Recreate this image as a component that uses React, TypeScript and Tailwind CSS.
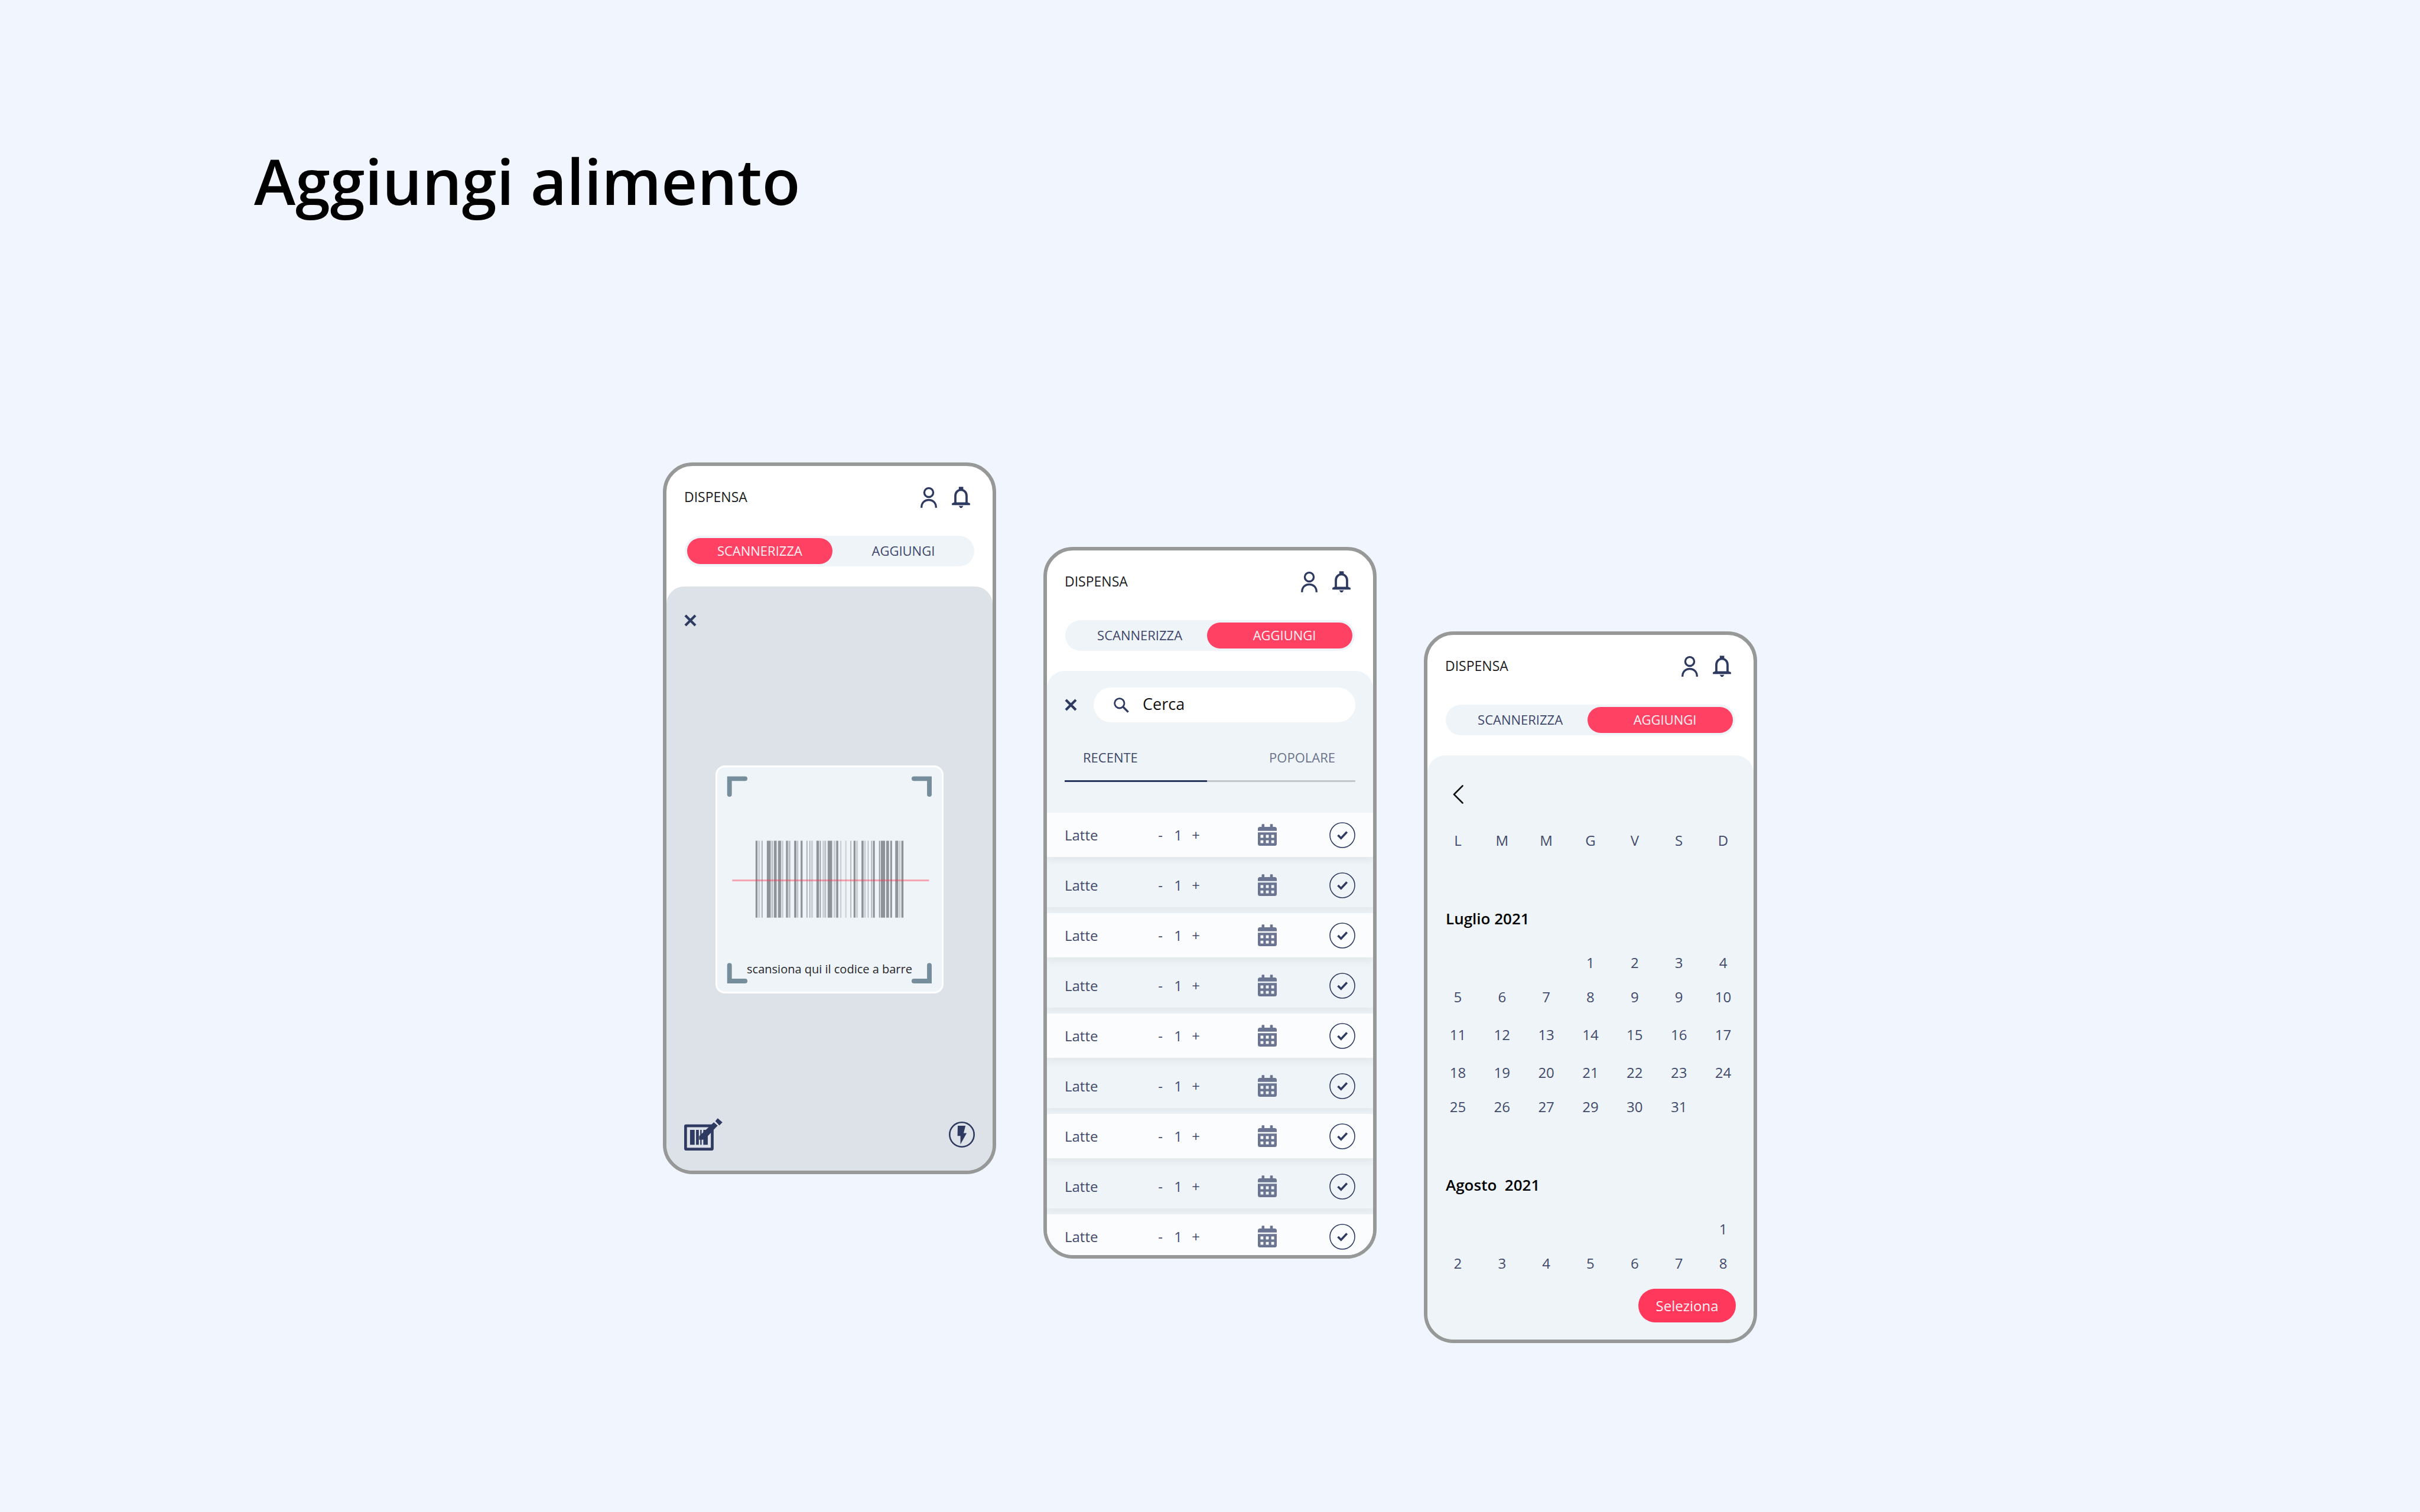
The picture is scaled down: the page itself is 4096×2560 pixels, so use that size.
import type { ReactNode } from "react";

const NAVY = "#2f3a60";

function PersonIcon() {
  return (
    <svg viewBox="66 58 118 150" className="h-[36px] w-[28px]" fill="none" stroke={NAVY} strokeWidth="14">
      <circle cx="125" cy="99" r="32" />
      <path d="M73 208C73 172 95 152 125 152S177 172 177 208" />
    </svg>
  );
}

function BellIcon() {
  return (
    <svg viewBox="288 50 131 158" className="h-[37px] w-[31px]" fill={NAVY}>
      <path d="M313 172V116a40.5 43 0 0 1 81 0V172" fill="none" stroke={NAVY} strokeWidth="16" />
      <path d="M338 51h32v24h-32z" />
      <path d="M288 183v-12l16-8h98l17 8v12z" />
      <path d="M337 189h34l-11 15h-12z" />
    </svg>
  );
}

function CloseIcon() {
  return (
    <svg viewBox="0 0 21 21" className="size-[21px]" fill="none" stroke={NAVY} strokeWidth="4.2">
      <path d="M2 2L19 19M19 2L2 19" />
    </svg>
  );
}

function SearchIcon() {
  return (
    <svg viewBox="0 0 26 26" className="size-[26px] shrink-0" fill="none" stroke={NAVY} strokeWidth="2.8">
      <circle cx="9.8" cy="9.8" r="8.2" />
      <path d="M15.5 15.5L24.6 24.6" strokeWidth="3.4" />
    </svg>
  );
}

function CalendarIcon() {
  return (
    <svg viewBox="0 0 32 37" className="h-[37px] w-[32px]" fill="#6b7591">
      <path d="M6.5 1.2a1 1 0 0 1 1-1h2.6a1 1 0 0 1 1 1V5h9.6V1.2a1 1 0 0 1 1-1h2.6a1 1 0 0 1 1 1V5H28.5A3.500 3.500 0 0 1 32 8.500V11.800H0V8.500A3.500 3.500 0 0 1 3.500 5H6.500z" />
      <path
        fillRule="evenodd"
        d="M0 14.200H32V33.500A3.500 3.500 0 0 1 28.500 37H3.500A3.500 3.500 0 0 1 0 33.500zM4.500 18.600v4.800h4.800v-4.800zM13.600 18.600v4.800h4.800v-4.800zM22.700 18.600v4.800h4.800v-4.800zM4.500 27.800v4.800h4.800v-4.800zM13.600 27.800v4.800h4.800v-4.800zM22.700 27.800v4.800h4.800v-4.800z"
      />
    </svg>
  );
}

function CheckCircleIcon() {
  return (
    <svg viewBox="0 0 44 44" className="size-[44px]" fill="none" stroke={NAVY}>
      <circle cx="22" cy="22" r="21" strokeWidth="1.6" />
      <path d="M14.500 22L19.800 27.200L29.800 16.600" strokeWidth="3.6" />
    </svg>
  );
}

function FlashIcon() {
  return (
    <svg viewBox="0 0 44 44" className="size-[44px]" fill={NAVY}>
      <circle cx="22" cy="22" r="20.7" fill="none" stroke={NAVY} strokeWidth="2.6" />
      <path d="M15 7H28.200L25 19.500H30.200L19.600 38.500V24.200H14.600z" />
    </svg>
  );
}

function BarcodeEditIcon() {
  return (
    <svg viewBox="53 52 275 232" className="h-[55px] w-[65px]" fill={NAVY}>
      <rect x="63" y="107" width="191" height="167" rx="3" fill="none" stroke={NAVY} strokeWidth="20" />
      <path d="M95 136h33v107H95zM138 136h20v107h-20zM168 136h10v107h-10zM190 136h32v107h-32z" />
      <path d="M265 82L293 106L208 196L186 207H160V182z" />
      <path d="M293 53L327 82L305 105L276 74z" />
    </svg>
  );
}

function ChevronLeftIcon() {
  return (
    <svg viewBox="0 0 18 32" className="h-[32px] w-[18px]" fill="none" stroke="#111" strokeWidth="2.6">
      <path d="M16.500 1.500L2 16L16.500 30.500" strokeLinecap="round" strokeLinejoin="round" />
    </svg>
  );
}

const DARK = "#8d9398";
const MID = "#aab1b7";
const LIGHT = "#cad0d5";

const BARS: [number, number, string][] = [
  [312, 324, DARK], [328, 340, LIGHT], [350, 355, DARK], [382, 406, DARK], [406, 412, LIGHT],
  [414, 420, MID], [426, 443, DARK], [443, 447, LIGHT], [452, 470, DARK], [473, 485, LIGHT],
  [501, 513, DARK], [514, 522, LIGHT], [522, 528, MID], [552, 566, DARK], [571, 577, MID],
  [592, 604, DARK], [628, 635, MID], [646, 652, MID], [656, 669, LIGHT], [690, 706, DARK],
  [711, 717, DARK], [728, 742, LIGHT], [744, 750, MID], [760, 788, DARK], [797, 809, LIGHT],
  [813, 826, DARK], [836, 846, LIGHT], [869, 877, LIGHT], [901, 907, MID], [921, 933, DARK],
  [938, 942, MID], [942, 948, LIGHT], [970, 983, DARK], [986, 997, LIGHT], [1009, 1014, MID],
  [1030, 1036, MID], [1041, 1053, DARK], [1079, 1085, DARK], [1090, 1117, DARK], [1124, 1141, DARK],
  [1149, 1160, DARK], [1180, 1198, DARK], [1201, 1213, LIGHT], [1218, 1231, DARK],
];

function ScanFrame() {
  return (
    <svg viewBox="63 57 1417 1417" className="absolute inset-0 size-full" aria-hidden="true">
      {BARS.map(([from, to, tone]) => (
        <rect key={from} x={from} y="525" width={to - from} height="478" fill={tone} />
      ))}
      <rect x="167" y="766" width="1223" height="11" fill="#ff2a44" fillOpacity="0.4" />
      <g fill="none" stroke="#768d9c" strokeWidth="29" strokeLinecap="round">
        <path d="M247 139H150V237" />
        <path d="M1296 139H1392V237" />
        <path d="M247 1397H150V1299" />
        <path d="M1296 1397H1392V1299" />
      </g>
    </svg>
  );
}

type Mode = "scan" | "add";

function ModeSwitch({ mode }: { mode: Mode }) {
  const base = "h-[44px] rounded-full pb-[2px] text-[22px] leading-[42px]";
  const on = `${base} w-[51%] bg-[#ff4163] text-[#fff3f5]`;
  const off = `${base} flex-1 text-[#3d4669]`;
  return (
    <div className="mx-[31px] mt-3 flex rounded-full bg-[#eff4f9] p-1">
      <button type="button" aria-pressed={mode === "scan"} className={mode === "scan" ? on : `${off} pl-2`}>
        SCANNERIZZA
      </button>
      <button type="button" aria-pressed={mode === "add"} className={mode === "add" ? `${on} pl-4` : `${off} pl-1`}>
        AGGIUNGI
      </button>
    </div>
  );
}

function Phone({ mode, offset, sheet, children }: { mode: Mode; offset: string; sheet: string; children: ReactNode }) {
  return (
    <section
      className={`flex h-[1205px] w-full max-w-[564px] flex-col overflow-hidden rounded-[50px] border-[6px] border-[#969998] bg-white ${offset}`}
    >
      <header className="flex h-[106px] shrink-0 items-center justify-between px-[30px]">
        <h2 className="pb-[2px] text-[23px] text-[#1c1c1e]">DISPENSA</h2>
        <div className="flex items-center gap-[25px] pr-[8px]">
          <button type="button" aria-label="Profilo"><PersonIcon /></button>
          <button type="button" aria-label="Notifiche"><BellIcon /></button>
        </div>
      </header>
      <ModeSwitch mode={mode} />
      <div className={`mt-[34px] flex flex-1 flex-col rounded-t-[30px] ${sheet}`}>{children}</div>
    </section>
  );
}

function ScanScreen() {
  return (
    <Phone mode="scan" offset="mt-0" sheet="bg-[#dde2e9] px-[30px] pt-[47px] pb-[34px]">
      <button type="button" aria-label="Chiudi" className="self-start"><CloseIcon /></button>
      <div className="relative mt-[235px] flex size-[386px] flex-col justify-end self-center rounded-2xl bg-[#eff4f9] pb-[25px] text-center inset-ring-[3px] inset-ring-white">
        <ScanFrame />
        <p className="relative text-[20px] leading-[32px] text-[#26282c]">scansiona qui il codice a barre</p>
      </div>
      <div className="mt-auto flex items-center justify-between">
        <button type="button" aria-label="Inserisci codice"><BarcodeEditIcon /></button>
        <button type="button" aria-label="Flash"><FlashIcon /></button>
      </div>
    </Phone>
  );
}

function FoodRow({ name, white }: { name: string; white: boolean }) {
  return (
    <li
      className={`flex h-[75px] shrink-0 items-center px-[30px] text-[24px] text-[#424a6b] shadow-[0_7px_10px_rgba(60,50,30,0.06)] ${white ? "bg-[#fafcfd]" : ""}`}
    >
      <span className="flex-1">{name}</span>
      <div className="flex items-center">
        <button type="button" aria-label="Riduci" className="w-[22px]">-</button>
        <span className="w-[38px] text-center">1</span>
        <button type="button" aria-label="Aumenta" className="w-[22px]">+</button>
      </div>
      <button type="button" aria-label="Scadenza" className="ml-[94px]"><CalendarIcon /></button>
      <button type="button" aria-label="Conferma" className="ml-[89px]"><CheckCircleIcon /></button>
    </li>
  );
}

const FOODS = ["Latte", "Latte", "Latte", "Latte", "Latte", "Latte", "Latte", "Latte", "Latte"];

function AddScreen() {
  return (
    <Phone mode="add" offset="mt-[143px]" sheet="bg-[#eef4f8] pt-7">
      <div className="flex items-center gap-[28px] px-[30px]">
        <button type="button" aria-label="Chiudi"><CloseIcon /></button>
        <label className="flex h-[59px] min-w-0 flex-1 items-center gap-[23px] rounded-full bg-white px-[34px]">
          <SearchIcon />
          <input
            type="search"
            aria-label="Cerca"
            placeholder="Cerca"
            className="w-full min-w-0 bg-transparent pb-[2px] text-[27px] outline-none placeholder:text-[#111]"
          />
        </label>
      </div>
      <div className="mx-[30px] mt-5 flex text-[22px]">
        <button type="button" className="h-[81px] w-[49%] border-b-[3px] border-[#27365a] pl-[31px] text-left text-[#3d4669]">
          RECENTE
        </button>
        <button type="button" className="h-[81px] flex-1 border-b-[3px] border-[#c1c6cc] pr-[34px] text-right text-[#6a728a]">
          POPOLARE
        </button>
      </div>
      <ul className="mt-[52px] flex h-0 flex-1 flex-col gap-[10px]">
        {FOODS.map((name, i) => (
          <FoodRow key={i} name={name} white={i % 2 === 0} />
        ))}
      </ul>
    </Phone>
  );
}

const WEEKDAYS = ["L", "M", "M", "G", "V", "S", "D"];

const MONTHS = [
  {
    title: "Luglio 2021",
    weeks: [
      ["", "", "", "1", "2", "3", "4"],
      ["5", "6", "7", "8", "9", "9", "10"],
      ["11", "12", "13", "14", "15", "16", "17"],
      ["18", "19", "20", "21", "22", "23", "24"],
      ["25", "26", "27", "29", "30", "31", ""],
    ],
  },
  {
    title: "Agosto\u00a0 2021",
    weeks: [
      ["", "", "", "", "", "", "1"],
      ["2", "3", "4", "5", "6", "7", "8"],
    ],
  },
];

function CalendarScreen() {
  return (
    <Phone mode="add" offset="mt-[286px]" sheet="bg-[#eef4f8] pt-[50px]">
      <button type="button" aria-label="Indietro" className="ml-[43px] self-start"><ChevronLeftIcon /></button>
      <table className="mx-[14px] mt-[33px] table-fixed text-center text-[24px] text-[#424a6b]">
        <thead>
          <tr className="h-[58px]">
            {WEEKDAYS.map((day, i) => (
              <th key={i} scope="col" className="font-normal">{day}</th>
            ))}
          </tr>
        </thead>
        {MONTHS.map((month) => (
          <tbody key={month.title}>
            <tr className="h-[149px]">
              <th colSpan={7} scope="rowgroup" className="pb-7 pl-[17px] text-left align-bottom text-[26px] leading-[36px] font-semibold text-black">
                {month.title}
              </th>
            </tr>
            {month.weeks.map((week, w) => (
              <tr key={w} className={w === 2 ? "h-[70px]" : "h-[58px]"}>
                {week.map((day, d) => (
                  <td key={d}>{day}</td>
                ))}
              </tr>
            ))}
          </tbody>
        ))}
      </table>
      <button
        type="button"
        className="mt-[14px] mr-[30px] h-[57px] w-[165px] self-end rounded-full bg-[#ff385c] text-[24px] text-[#fff3f5]"
      >
        Seleziona
      </button>
    </Phone>
  );
}

export default function App() {
  return (
    <main className="min-h-screen bg-[#f1f6fe] pt-[230px] pb-20 font-['Open_Sans',sans-serif]">
      <h1 className="pl-[430px] text-[106px] leading-[152px] font-semibold text-black">Aggiungi alimento</h1>
      <div className="mt-[401px] flex items-start justify-center gap-20">
        <ScanScreen />
        <AddScreen />
        <CalendarScreen />
      </div>
    </main>
  );
}
